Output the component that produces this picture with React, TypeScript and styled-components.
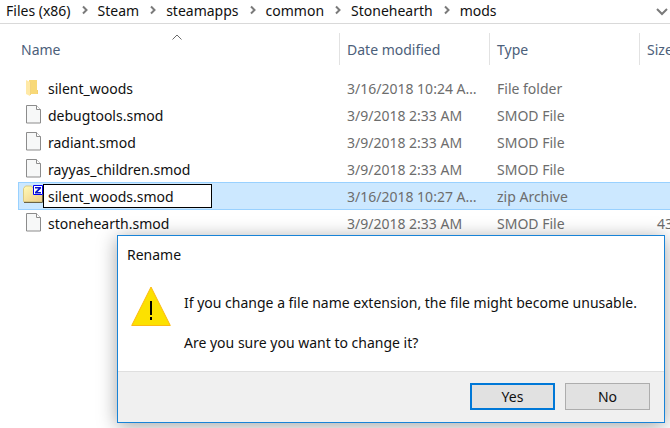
import React, { Fragment } from "react";
import styled, { createGlobalStyle, css } from "styled-components";

const GlobalStyle = createGlobalStyle`
  * { box-sizing: border-box; }
  body {
    margin: 0;
    background: #fff;
    color: #101010;
    font: 14px/20px "Noto Sans", "Open Sans", sans-serif;
  }
  button, input { font: inherit; color: inherit; }
`;

const Explorer = styled.div`
  position: relative;
  min-height: 100vh;
  overflow: hidden;
`;

const AddressBar = styled.nav`
  display: flex;
  align-items: center;
  height: 24px;
  padding: 0 2px 2px 6px;
  border-bottom: 1px solid #d9d9d9;
  white-space: nowrap;
`;

const Crumb = styled.a`
  color: #101010;
  text-decoration: none;
`;

const CrumbArrow = styled.svg`
  flex: none;
  width: 6px;
  height: 10px;
  margin: 0 10px 2px 11px;
`;

const HistoryButton = styled.button`
  display: flex;
  margin: 3px 0 0 auto;
  padding: 0;
  border: 0;
  background: none;
`;

const FileArea = styled.main`
  padding-left: 18px;
`;

const FileTable = styled.table`
  width: 100%;
  table-layout: fixed;
  border-collapse: collapse;
`;

const Column = styled.col<{ $width?: number }>`
  ${(p) => p.$width && css`width: ${p.$width}px;`}
`;

const HeadCell = styled.th`
  position: relative;
  height: 50px;
  padding: 0;
  overflow: hidden;
  color: #4c607a;
  font-weight: 400;
  text-align: left;
  white-space: nowrap;
`;

const HeadLabel = styled.div<{ $first?: boolean }>`
  height: 32px;
  padding: 7px 0 5px ${(p) => (p.$first ? 3 : 7)}px;
  border-left: ${(p) => (p.$first ? "0" : "1px solid #e2e2e2")};
`;

const SortMark = styled.svg`
  position: absolute;
  top: 10px;
  left: calc(50% - 7px);
`;

const FileRow = styled.tr<{ $selected?: boolean }>`
  height: 27px;
  ${(p) =>
    p.$selected &&
    css`
      background: #cce8ff;
      box-shadow: inset 0 1px #99d1ff, inset 1px 0 #99d1ff, 0 1px #99d1ff;
    `}
`;

const Cell = styled.td`
  height: 27px;
  padding: 2px 12px 0 8px;
  overflow: hidden;
  color: #6d6d6d;
  text-overflow: ellipsis;
  white-space: nowrap;
`;

const SizeCell = styled(Cell)`
  padding: 2px 0 0 18px;
  text-overflow: clip;
`;

const NameCell = styled.td`
  height: 27px;
  padding: 0;
`;

const NameLine = styled.div`
  display: flex;
  align-items: center;
  height: 27px;
`;

const IconSlot = styled.span`
  display: flex;
  flex: none;
  justify-content: flex-end;
  width: 25px;
`;

const FileName = styled.span`
  padding: 2px 5px 0;
  white-space: nowrap;
`;

const RenameInput = styled.input`
  width: 169px;
  height: 24px;
  padding: 1px 4px 0;
  border: 1px solid #000;
  border-radius: 0;
  outline: 0;
  background: #fff;
`;

const Dialog = styled.section`
  position: absolute;
  top: 235px;
  right: 5px;
  left: 117px;
  border: 1px solid #1883d7;
  background: #fff;
  box-shadow: 0 3px 18px rgba(0, 0, 0, 0.36);
`;

const DialogTitle = styled.h1`
  margin: 0;
  padding: 9px 9px 0;
  font-size: 14px;
  font-weight: 400;
  line-height: 20px;
`;

const DialogBody = styled.div`
  display: flex;
  gap: 13px;
  padding: 21px 13px 18px;
`;

const Message = styled.div`
  padding-top: 7px;
`;

const Paragraph = styled.p`
  margin: 0 0 20px;
  &:last-child { margin: 0; }
`;

const DialogFooter = styled.footer`
  display: flex;
  justify-content: flex-end;
  gap: 10px;
  padding: 11px 14px 12px;
  border-top: 1px solid #dfdfdf;
  background: #f0f0f0;
`;

const DialogButton = styled.button<{ $primary?: boolean }>`
  width: 85px;
  height: 27px;
  padding: 0;
  border: ${(p) => (p.$primary ? "2px solid #0078d7" : "1px solid #adadad")};
  border-radius: 0;
  background: #e1e1e1;
  line-height: 20px;
`;

function FolderIcon() {
  return (
    <svg width="17" height="18" viewBox="0 0 17 18" aria-hidden="true">
      <path d="M3 1h8v10h1v4H3z" fill="#f5d06f" />
      <path d="M3 1h8v14H3z" fill="#f8d978" />
      <path d="M0 1l4 2v14l-4-2z" fill="#ffe9a6" />
      <path d="M4.500 3v13" stroke="#f4d47c" />
    </svg>
  );
}

function FileIcon() {
  return (
    <svg width="17" height="19" viewBox="0 0 17 19" aria-hidden="true">
      <path d="M.5.5h10l4 4v13.500H.5z" fill="#f7f8f8" stroke="#8c8c8c" />
      <path d="M10.500.5v4h4" fill="#fff" stroke="#8c8c8c" />
    </svg>
  );
}

function ZipIcon() {
  return (
    <svg width="20" height="24" viewBox="0 0 20 24" aria-hidden="true">
      <defs>
        <linearGradient id="zipFolder" x1="0" y1="0" x2="1" y2="1">
          <stop offset="0" stopColor="#fffbb8" />
          <stop offset="1" stopColor="#efcb88" />
        </linearGradient>
      </defs>
      <path d="M.5 17.500V4.500l2-2.500h6l2 2.500h9v13z" fill="url(#zipFolder)" stroke="#d9c983" />
      <path d="M1 18.500h18.500V11" fill="none" stroke="#6b6347" />
      <path d="M10.500 1.500h9v9h-9z" fill="#fff" stroke="#0000f0" />
      <path d="M12 3h6v1.500L14.500 8H18v1.500h-6V8l3.500-3.500H12z" fill="#0a14c8" />
    </svg>
  );
}

function WarningIcon() {
  return (
    <svg width="40" height="41" viewBox="0 0 40 41" role="img" aria-label="Warning">
      <path d="M20 1L39.300 39.500H.7z" fill="#fce100" stroke="#fdb913" />
      <path d="M19 15h2v14h-2zM19 31h2v3h-2z" fill="#000" />
    </svg>
  );
}

const crumbs = ["Files (x86)", "Steam", "steamapps", "common", "Stonehearth", "mods"];

type Kind = "folder" | "file" | "zip";
const icons: Record<Kind, () => React.JSX.Element> = { folder: FolderIcon, file: FileIcon, zip: ZipIcon };

const files: { name: string; date: string; type: string; kind: Kind; size?: string; renaming?: boolean }[] = [
  { name: "silent_woods", date: "3/16/2018 10:24 AM", type: "File folder", kind: "folder" },
  { name: "debugtools.smod", date: "3/9/2018 2:33 AM", type: "SMOD File", kind: "file" },
  { name: "radiant.smod", date: "3/9/2018 2:33 AM", type: "SMOD File", kind: "file" },
  { name: "rayyas_children.smod", date: "3/9/2018 2:33 AM", type: "SMOD File", kind: "file" },
  { name: "silent_woods.smod", date: "3/16/2018 10:27 AM", type: "zip Archive", kind: "zip", renaming: true },
  { name: "stonehearth.smod", date: "3/9/2018 2:33 AM", type: "SMOD File", kind: "file", size: "43" },
];

export default function App() {
  return (
    <Explorer>
      <GlobalStyle />
      <AddressBar aria-label="Address">
        {crumbs.map((crumb, i) => (
          <Fragment key={crumb}>
            {i > 0 && (
              <CrumbArrow viewBox="0 0 6 10" aria-hidden="true">
                <path d="M1 1.500L4.500 5L1 8.500" fill="none" stroke="#7a7a7a" strokeWidth="2" />
              </CrumbArrow>
            )}
            <Crumb href="#">{crumb}</Crumb>
          </Fragment>
        ))}
        <HistoryButton aria-label="Previous locations">
          <svg width="12" height="8" viewBox="0 0 12 8" aria-hidden="true">
            <path d="M1 1l5 5 5-5" fill="none" stroke="#7a7a7a" strokeWidth="2" />
          </svg>
        </HistoryButton>
      </AddressBar>
      <FileArea>
        <FileTable>
          <colgroup>
            <Column />
            <Column $width={150} />
            <Column $width={150} />
            <Column $width={31} />
          </colgroup>
          <thead>
            <tr>
              <HeadCell aria-sort="ascending">
                <SortMark width="10" height="6" viewBox="0 0 10 6" aria-hidden="true">
                  <path d="M.5 5.500L5 1l4.500 4.500" fill="none" stroke="#6a6a6a" />
                </SortMark>
                <HeadLabel $first>Name</HeadLabel>
              </HeadCell>
              <HeadCell><HeadLabel>Date modified</HeadLabel></HeadCell>
              <HeadCell><HeadLabel>Type</HeadLabel></HeadCell>
              <HeadCell><HeadLabel>Size</HeadLabel></HeadCell>
            </tr>
          </thead>
          <tbody>
            {files.map((file) => {
              const Icon = icons[file.kind];
              return (
                <FileRow key={file.name} $selected={file.renaming}>
                  <NameCell>
                    <NameLine>
                      <IconSlot><Icon /></IconSlot>
                      {file.renaming ? (
                        <RenameInput aria-label="File name" defaultValue={file.name} />
                      ) : (
                        <FileName>{file.name}</FileName>
                      )}
                    </NameLine>
                  </NameCell>
                  <Cell>{file.date}</Cell>
                  <Cell>{file.type}</Cell>
                  <SizeCell>{file.size}</SizeCell>
                </FileRow>
              );
            })}
          </tbody>
        </FileTable>
      </FileArea>
      <Dialog role="dialog" aria-labelledby="rename-title">
        <DialogTitle id="rename-title">Rename</DialogTitle>
        <DialogBody>
          <WarningIcon />
          <Message>
            <Paragraph>If you change a file name extension, the file might become unusable.</Paragraph>
            <Paragraph>Are you sure you want to change it?</Paragraph>
          </Message>
        </DialogBody>
        <DialogFooter>
          <DialogButton $primary>Yes</DialogButton>
          <DialogButton>No</DialogButton>
        </DialogFooter>
      </Dialog>
    </Explorer>
  );
}
